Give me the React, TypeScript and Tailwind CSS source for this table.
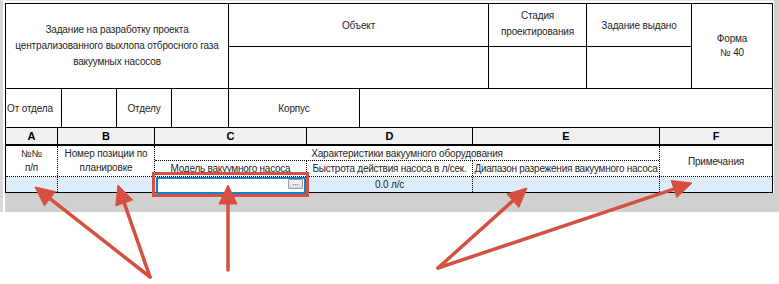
import React from "react";

const RED = "#d5503f";

function Arrow({ x1, y1, x2, y2 }: { x1: number; y1: number; x2: number; y2: number }) {
  const dx = x2 - x1;
  const dy = y2 - y1;
  const len = Math.sqrt(dx * dx + dy * dy);
  const ux = dx / len;
  const uy = dy / len;
  const L = 19;
  const W = 9;
  const bx = x2 - ux * L;
  const by = y2 - uy * L;
  const nx = -uy;
  const ny = ux;
  const pts = `${x2},${y2} ${bx + nx * W},${by + ny * W} ${bx - nx * W},${by - ny * W}`;
  return (
    <g>
      <line x1={x1} y1={y1} x2={bx + ux * 2} y2={by + uy * 2} stroke={RED} strokeWidth={3.5} strokeLinecap="round" />
      <polygon points={pts} fill={RED} stroke={RED} strokeWidth={1} strokeLinejoin="round" />
    </g>
  );
}

export default function App() {
  return (
    <div
      className="relative w-[779px] h-[284px] bg-white overflow-hidden text-[10px] tracking-[-0.15px] text-[#1f1f1f]"
      style={{ fontFamily: '"Liberation Sans", Arial, sans-serif' }}
    >
      <div className="flex h-[212px]">
        <div className="w-[3px] bg-[#d8d8d8]" />
        <div className="w-[2px]" />
        <div className="flex flex-col w-[769px]">
          <div className="h-px bg-[#f4e4e4]" />
          <div className="h-[2px]" />
          <div className="w-[768px] flex flex-col">
            {/* Form header */}
            <div className="border border-black flex flex-col">
              <div className="flex h-[85px] border-b border-black">
                <div className="w-[223px] border-r border-black flex items-center justify-center text-center leading-[16px]">
                  <div>
                    Задание на разработку проекта
                    <br />
                    централизованного выхлопа отбросного газа
                    <br />
                    вакуумных насосов
                  </div>
                </div>
                <div className="w-[463px] border-r border-black flex flex-col">
                  <div className="flex h-[43px] border-b border-black">
                    <div className="w-[260px] border-r border-black flex items-center justify-center">Объект</div>
                    <div className="w-[98px] border-r border-black flex items-center justify-center text-center leading-[16px] pb-[2px]">
                      <div>
                        Стадия
                        <br />
                        проектирования
                      </div>
                    </div>
                    <div className="flex-1 flex items-center justify-center">Задание выдано</div>
                  </div>
                  <div className="flex flex-1">
                    <div className="w-[260px] border-r border-black" />
                    <div className="w-[98px] border-r border-black" />
                    <div className="flex-1" />
                  </div>
                </div>
                <div className="flex-1 flex items-center justify-center text-center leading-[14px]">
                  <div>
                    Форма
                    <br />№ 40
                  </div>
                </div>
              </div>
              <div className="flex h-[38px]">
                <div className="w-[56px] border-r border-black flex items-center pl-[1px]">От отдела</div>
                <div className="w-[55px] border-r border-black" />
                <div className="w-[55px] border-r border-black flex items-center justify-center">Отделу</div>
                <div className="w-[57px] border-r border-black" />
                <div className="w-[131px] border-r border-black flex items-center justify-center">Корпус</div>
                <div className="flex-1" />
              </div>
            </div>

            {/* Table */}
            <div className="border-x border-black flex flex-col">
              <div className="flex h-[18px] bg-[#f0f0f0] border-b-2 border-black font-bold text-[11px] tracking-normal leading-[16px] text-black">
                <div className="w-[52px] border-r border-black text-center">A</div>
                <div className="w-[97px] border-r border-black text-center">B</div>
                <div className="w-[152px] border-r border-black text-center">C</div>
                <div className="w-[166px] border-r border-black text-center">D</div>
                <div className="w-[187px] border-r border-black text-center">E</div>
                <div className="flex-1 text-center">F</div>
              </div>
              <div className="flex h-[31px] border-b border-dotted border-black">
                <div className="w-[52px] border-r border-dotted border-black flex items-center justify-center text-center leading-[14px]">
                  <div>
                    №№
                    <br />
                    п/п
                  </div>
                </div>
                <div className="w-[97px] border-r border-dotted border-black flex items-center justify-center text-center leading-[14px]">
                  <div>
                    Номер позиции по
                    <br />
                    планировке
                  </div>
                </div>
                <div className="w-[505px] border-r border-dotted border-black flex flex-col">
                  <div className="h-[15px] border-b border-dotted border-black text-center leading-[14px] pt-px whitespace-nowrap">
                    Характеристики вакуумного оборудования
                  </div>
                  <div className="flex flex-1 leading-[15px] whitespace-nowrap tracking-[-0.25px]">
                    <div className="w-[152px] border-r border-dotted border-black text-center">Модель вакуумного насоса</div>
                    <div className="w-[166px] border-r border-dotted border-black text-center">Быстрота действия насоса в л/сек.</div>
                    <div className="flex-1 text-center">Диапазон разрежения вакуумного насоса</div>
                  </div>
                </div>
                <div className="flex-1 flex items-center justify-center">Примечания</div>
              </div>
              <div className="flex h-[16px] bg-[#dcedf9] border-b border-black leading-[15px]">
                <div className="w-[52px] border-r border-dotted border-black" />
                <div className="w-[97px] border-r border-dotted border-black" />
                <div className="relative w-[152px] border-r border-dotted border-black">
                  <div className="absolute left-px top-0 w-[150px] h-[17px] border-2 border-[#0a83d6] bg-white">
                    <div className="absolute right-px top-0 w-[15px] h-[10px] border border-[#9a9a9a] rounded-[1px] bg-gradient-to-b from-[#f6f6f6] to-[#dcdcdc] text-[8px] leading-[6px] text-center text-[#333]">
                      ...
                    </div>
                  </div>
                </div>
                <div className="w-[166px] border-r border-dotted border-black text-center">0.0 л/с</div>
                <div className="w-[187px] border-r border-dotted border-black" />
                <div className="flex-1" />
              </div>
            </div>
          </div>
          <div className="flex-1 bg-[#d0d0d0]" />
        </div>
        <div className="flex-1 bg-[#d0d0d0]" />
      </div>

      {/* annotation highlight */}
      <div className="absolute left-[152px] top-[172px] w-[157px] h-[25px] border-[3px] border-[#d5503f] pointer-events-none" />

      <svg className="absolute left-0 top-0 pointer-events-none" width={779} height={284}>
        <Arrow x1={150} y1={277} x2={35} y2={187} />
        <Arrow x1={150} y1={277} x2={118} y2={185} />
        <Arrow x1={228} y1={270} x2={228} y2={185} />
        <Arrow x1={438} y1={268} x2={527} y2={188} />
        <Arrow x1={438} y1={268} x2={692} y2={183} />
      </svg>
    </div>
  );
}
